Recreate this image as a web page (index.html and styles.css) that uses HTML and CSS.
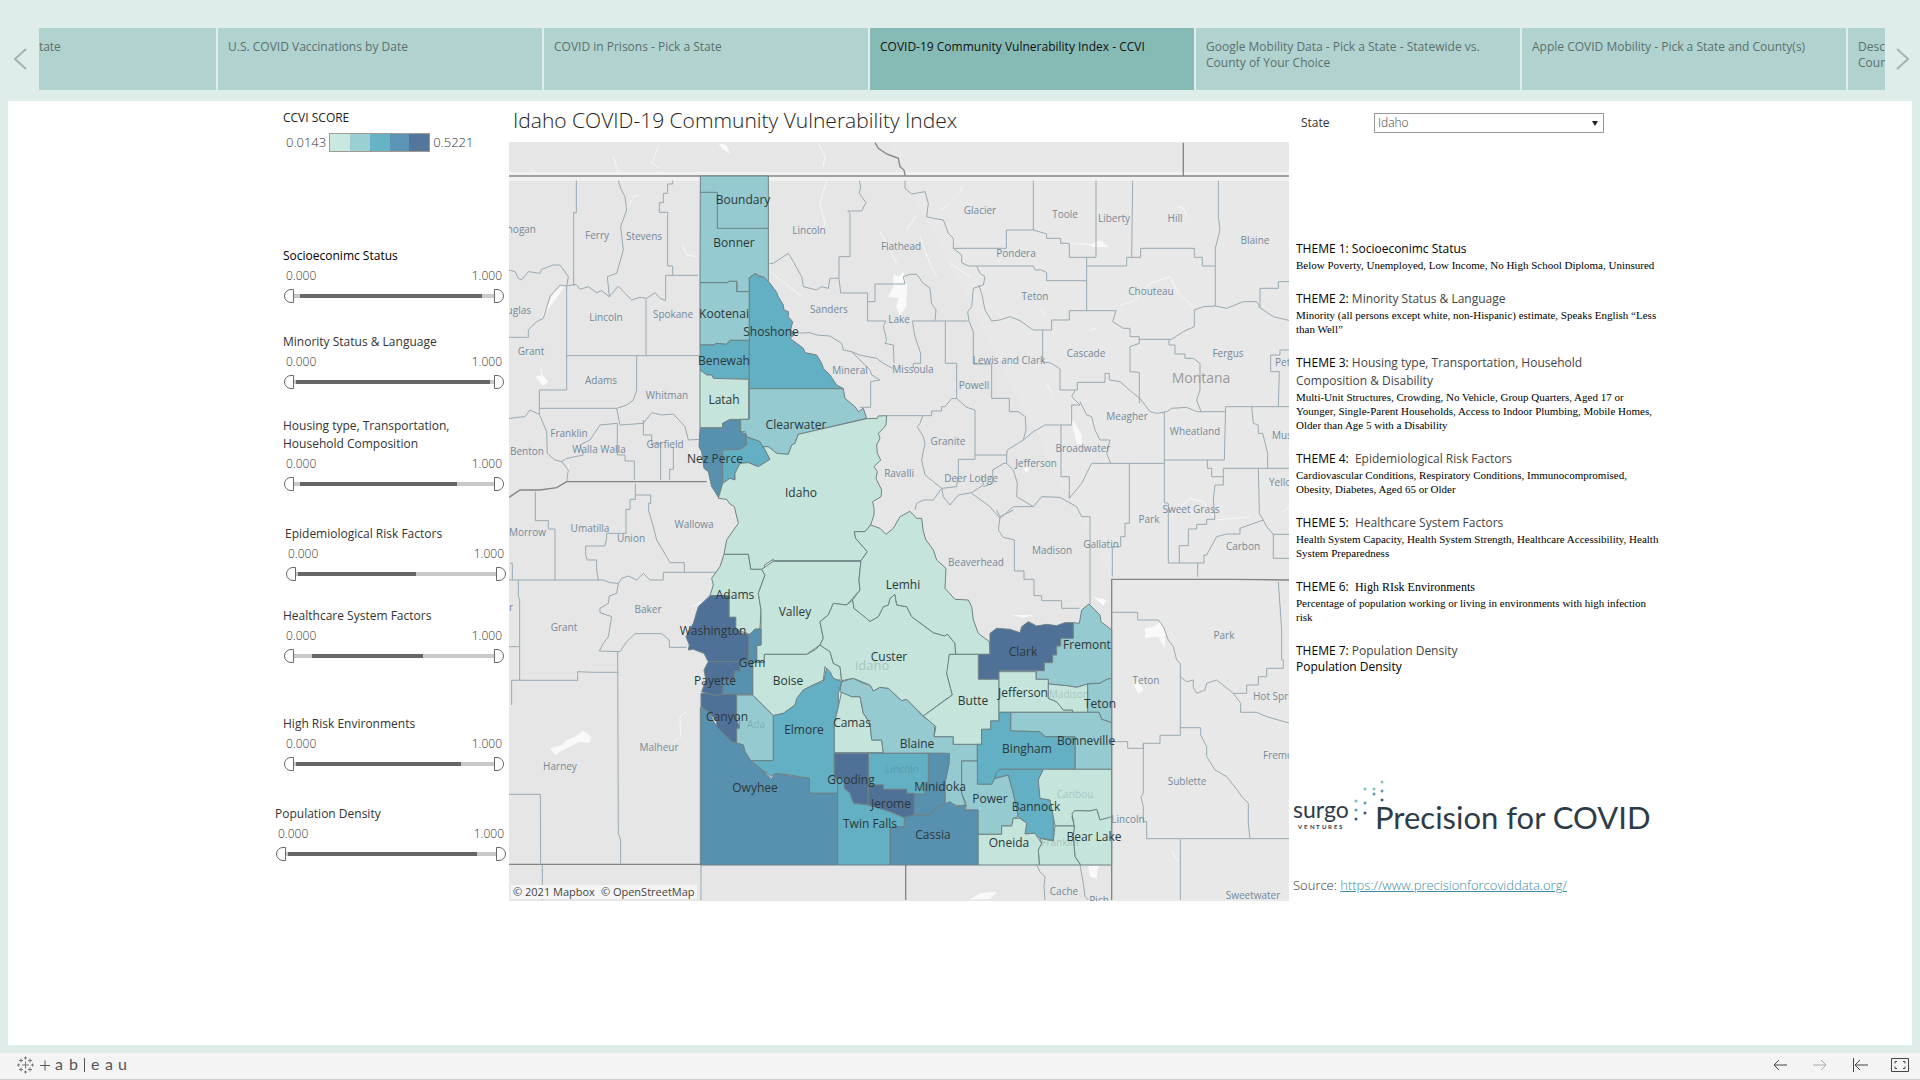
FILE: index.html
```html
<!DOCTYPE html>
<html lang="en">
<head>
<meta charset="utf-8">
<title>COVID-19 Community Vulnerability Index - CCVI</title>
<link rel="stylesheet" href="styles.css">
</head>
<body>
<nav class="story" aria-label="Story points">
  <button class="story-arrow" type="button" aria-label="Previous"><svg width="14" height="24" viewBox="0 0 14 24"><path d="M13 2 2 12 13 22"/></svg></button>
  <div class="story-window">
    <div class="story-track">
      <button class="point" type="button">COVID Variants - Pick a State</button>
      <button class="point" type="button">U.S. COVID Vaccinations by Date</button>
      <button class="point" type="button">COVID in Prisons - Pick a State</button>
      <button class="point point-active" type="button">COVID-19 Community Vulnerability Index - CCVI</button>
      <button class="point" type="button">Google Mobility Data - Pick a State - Statewide vs. County of Your Choice</button>
      <button class="point" type="button">Apple COVID Mobility - Pick a State and County(s)</button>
      <button class="point" type="button">Desc<br>Coun</button>
    </div>
  </div>
  <button class="story-arrow" type="button" aria-label="Next"><svg width="14" height="24" viewBox="0 0 14 24"><path d="M1 2 12 12 1 22"/></svg></button>
</nav>

<main class="sheet">
  <div class="dashboard">
    <section class="filters">
      <h2 class="legend-title">CCVI SCORE</h2>
      <div class="legend"><span>0.0143</span><div class="ramp"><i class="c1"></i><i class="c2"></i><i class="c3"></i><i class="c4"></i><i class="c5"></i></div><span>0.5221</span></div>

      <fieldset class="filter filter-first">
        <legend class="filter-title strong">Socioeconimc Status</legend>
        <div class="values"><span>0.000</span><span>1.000</span></div>
        <div class="slider"><div class="rail"><div class="fill" style="left:4%;width:89%"></div></div><input class="low" type="range" aria-label="Minimum" value="0"><input class="high" type="range" aria-label="Maximum" value="100"></div>
      </fieldset>
      <fieldset class="filter gap-sm">
        <legend class="filter-title">Minority Status &amp; Language</legend>
        <div class="values"><span>0.000</span><span>1.000</span></div>
        <div class="slider"><div class="rail"><div class="fill" style="left:2%;width:95%"></div></div><input class="low" type="range" aria-label="Minimum" value="0"><input class="high" type="range" aria-label="Maximum" value="100"></div>
      </fieldset>
      <fieldset class="filter">
        <legend class="filter-title">Housing type, Transportation,<br>Household Composition</legend>
        <div class="values"><span>0.000</span><span>1.000</span></div>
        <div class="slider"><div class="rail"><div class="fill" style="left:4%;width:77%"></div></div><input class="low" type="range" aria-label="Minimum" value="0"><input class="high" type="range" aria-label="Maximum" value="100"></div>
      </fieldset>
      <fieldset class="filter gap-md inset">
        <legend class="filter-title">Epidemiological Risk Factors</legend>
        <div class="values"><span>0.000</span><span>1.000</span></div>
        <div class="slider"><div class="rail"><div class="fill" style="left:2%;width:58%"></div></div><input class="low" type="range" aria-label="Minimum" value="0"><input class="high" type="range" aria-label="Maximum" value="100"></div>
      </fieldset>
      <fieldset class="filter gap-xs">
        <legend class="filter-title">Healthcare System Factors</legend>
        <div class="values"><span>0.000</span><span>1.000</span></div>
        <div class="slider"><div class="rail"><div class="fill" style="left:10%;width:54%"></div></div><input class="low" type="range" aria-label="Minimum" value="0"><input class="high" type="range" aria-label="Maximum" value="100"></div>
      </fieldset>
      <fieldset class="filter gap-lg">
        <legend class="filter-title">High Risk Environments</legend>
        <div class="values"><span>0.000</span><span>1.000</span></div>
        <div class="slider"><div class="rail"><div class="fill" style="left:2%;width:81%"></div></div><input class="low" type="range" aria-label="Minimum" value="0"><input class="high" type="range" aria-label="Maximum" value="100"></div>
      </fieldset>
      <fieldset class="filter gap-md wide">
        <legend class="filter-title">Population Density</legend>
        <div class="values"><span>0.000</span><span>1.000</span></div>
        <div class="slider"><div class="rail"><div class="fill" style="left:2%;width:88%"></div></div><input class="low" type="range" aria-label="Minimum" value="0"><input class="high" type="range" aria-label="Maximum" value="100"></div>
      </fieldset>
    </section>

    <section class="map-pane">
      <h1 class="map-title">Idaho COVID-19 Community Vulnerability Index</h1>
      <div class="map">
      <svg class="map-svg" viewBox="9 12 780 759" role="img" aria-label="Map of Idaho counties by vulnerability score">
        <g transform="scale(.33333)">
          <path class="land-east" d="M1160 36H2370V2320H1835V1348Z"/>
          <path class="band" d="M27 125H2370V152H27Z"/>
          <g class="water">
            <path d="M125 560 160 490 195 462 180 490 150 530Z"/>
            <path d="M105 740 125 735 118 700 128 735 145 755 130 768Z"/>
            <path d="M1180 430 1195 440 1210 425 1222 470 1218 530 1200 560 1188 530 1196 505 1165 500 1180 470Z"/>
            <path d="M655 40 680 45 690 72 665 55Z"/>
            <path d="M1710 860 1725 880 1745 915 1745 945 1730 940 1722 905Z"/>
            <path d="M1770 345 1800 330 1825 350 1780 352Z"/>
            <path d="M150 1855 185 1845 200 1830 225 1820 250 1802 275 1820 268 1840 240 1835 210 1850 190 1860 165 1875Z"/>
            <path d="M1935 1495 1960 1490 1980 1477 1995 1500 1995 1555 1975 1520 1950 1522 1935 1525Z"/>
            <path d="M1900 1660 1915 1650 1930 1680 1915 1692Z"/>
            <path d="M1765 2207 1795 2207 1790 2245 1770 2240Z"/>
            <path d="M1410 2308 1440 2290 1490 2285 1470 2308Z"/>
            <path d="M1535 1455 1600 1455 1570 1463Z"/>
            <path d="M1780 1400 1820 1410 1810 1427Z"/>
            <path d="M1570 1015 1590 1010 1580 1030Z"/>
          </g>
          <g class="streams">
            <path d="M980 152 960 220 975 280 960 320M955 40 975 80 970 110M475 50 455 100 480 115M340 80 355 125M380 240 400 200 418 195M90 115 105 130M548 345 560 375 590 380M810 425 860 465 905 500M1140 305 1165 350 1190 400M1220 300 1250 255M1260 320 1290 400 1310 440M1320 240 1345 225M2030 230 2050 235 2062 262M1860 525 1900 515 1950 460 2010 440 2035 490 2080 530M1770 600 1790 595M1700 340 1800 345M1640 760 1655 790M2010 1160 2070 1105 2110 1115 2150 1170 2250 1160M560 1745 540 1760 542 1820 520 1835M205 1030 205 1000M575 1430 620 1410M1350 400 1410 440M2350 1145 2370 1130M1625 540 1635 560M1378 190 1385 170M2015 2165 2035 2195"/>
          </g>
          <g class="county">
            <path d="M229 152V248H221V468M355 152L362 175 375 200 380 240 362 290 370 360 350 430 322 440 328 500M518 152V162H503V190H490V218H478V247H503V408H518V436M594 436H497V512M27 420 45 425 55 445 65 450 85 425 120 430 125 418 160 405 180 405 205 440 200 468M27 622H85V600L110 575 130 565 150 500 180 465 200 468 228 463 240 478 265 470 290 488 305 482 328 500 355 468 375 490 395 510 420 502 440 505 465 488 480 505 497 512"/>
            <path d="M200 468V780H118V853L90 840 75 860 50 862 27 866M118 835H350L380 825 400 810 410 780V677M200 677H597M438 508V677M350 835 360 885 430 880 455 848 485 855 520 852 555 890 565 930 597 928M430 870V915H455V940H482V1050M520 950V1018H509V1050M352 880V975H375V993H403V1050M352 880 300 885 270 930 240 945 250 975 200 985 185 995M118 853 140 905 142 970 165 990 185 995 205 1020 200 1055"/>
            <path d="M106 1085V1172H145V1197H165V1350M406 1060V1095H452V1120H446V1142L460 1190 470 1230 500 1280 510 1298H553V1327M406 1095V1108H390V1138H378V1210H320V1225L315 1248H257V1275L262 1290H290V1320L295 1350M27 1350H310L330 1358 355 1360 365 1345 385 1338 410 1350 430 1330 450 1350H490V1327H650"/>
            <path d="M355 1360 350 1390 328 1398 325 1420 300 1435 300 1448 335 1460 325 1520 310 1540 298 1563 360 1565 380 1535 405 1511H485L508 1530V1552H560M353 1565 355 2110 362 2130V2200M35 1725V1651H233V1625L280 1627H355M27 1993H121L122 2200M55 1350V1400L59 1410V1651M27 1550H58M127 2205V2310M603 2205V2310M30 1300H37V1350"/>
            <path d="M1078 152 1082 170 1078 190 1098 218 1085 243H1043L1050 250V380H1017V445H990L985 475 965 470 950 480 910 470 905 440 880 395 865 370 850 380 820 400 808 400M1017 445 1022 489H1103V573H1158L1150 590 1160 630 1155 640 1180 645 1182 700M1103 515H1125V462H1215L1210 440 1230 433 1250 433 1270 460 1290 475 1295 520 1308 540 1305 572"/>
            <path d="M875 610 930 608 950 615 990 618 1025 640 1030 660 1055 665 1078 675 1130 685 1150 700 1178 715M1055 665 1080 690 1110 720 1115 735 1140 750 1112 755V832H1080M1160 857H1268"/>
            <path d="M1215 152 1215 175 1235 192 1275 185 1285 220 1280 260 1300 265 1330 270 1345 310 1360 325 1360 355 1385 375 1385 398 1405 408 1430 408 1440 430 1455 440 1450 465 1420 475 1415 530 1403 545 1407 573 1420 605V702M1600 152V300H1519V355H1360M1430 408H1600L1605 420H1625L1640 428V452H1760M1600 300 1640 312V325H1682V340H1708V382H1788V152"/>
            <path d="M1760 382V542M1760 408H1880V382H1922V355H2083V382H2107V408H2146M1898 152 1895 382M2155 152V260L2160 300 2146 355V528M1436 465 1445 490 1455 540 1475 573 1500 570 1530 560 1560 572 1600 600 1655 600V570H1708V542H1848L1838 575 1870 595H1890V620H1918V628H2015L2050 605 2083 590V540L2110 530 2146 528 2180 535 2230 515 2270 515 2280 530V475H2335V455H2370M2275 530 2320 560 2370 572"/>
            <path d="M1628 600V695L1655 700 1680 717V780H1732V757H1815V730H1828V750L1860 755 1900 790 1920 805 1950 845 1970 850 2000 845 2015 835 2060 832 2090 845H2177M1993 845V990H2173L2177 830M1918 628V640L1890 650V725L1918 727V820M2007 628V645H2025V672H2055V685H2080L2100 700V780L2090 810 2103 845M2177 830H2370M2335 830 2338 725H2312V675H2340V660H2370M2255 830 2260 880 2275 885V910H2288L2303 970V1015"/>
            <path d="M1237 573H1403M1237 573 1245 620 1252 640 1262 670V700H1240V715M1336 573V700H1370V805L1355 806 1335 830H1325V843H1295V857H1268L1260 880 1252 890 1270 920 1275 940 1265 990 1275 1035 1300 1055 1325 1075 1330 1100 1350 1125 1375 1095 1415 1088 1450 1065 1445 1035M1370 805 1400 832 1425 840V975H1520L1522 960 1570 930 1578 900 1576 860 1555 845H1528V805H1475V702H1420M1425 975V988H1375V1035L1370 1070 1325 1075"/>
            <path d="M1520 975V1000H1512L1478 1020V1060L1450 1070M1520 1000 1540 1020 1552 1060 1550 1100 1600 1130H1540L1500 1165 1470 1130 1415 1090M1600 1130 1625 1100 1680 1102 1730 1130 1745 1160H1770V1422M1570 930 1600 905 1635 885H1715V825L1740 825 1715 800 1725 782M1683 885V1040H1708V1105L1745 1060 1775 1000H1993M1740 815 1760 855 1775 860 1785 900 1800 930 1830 930 1820 970 1832 1000"/>
            <path d="M1993 990V1118L2005 1120V1299H2112V1275H2120L2150 1220 2180 1212H2220V1195L2290 1170 2278 1150V1140L2275 1015M1888 1000V1180H1875V1220H1862V1250H1837V1340M2122 990V1015H2135V1040H2170V1015H2370M2170 1040V1065H2145L2140 1110 2145 1168H2120V1183H2090V1197H2065V1247H2038V1299M2093 1299V1340M2290 1170 2300 1190 2320 1213H2370M2320 1213V1285H2370"/>
            <path d="M1245 1140 1250 1120 1270 1110 1300 1110 1325 1075M1490 1140 1500 1160 1495 1200 1510 1222 1543 1230V1323H1572V1348H1602V1397H1625V1412H1685V1435H1738M1540 1140 1500 1160M1837 1447H1913V1470H1975L1990 1490 2005 1530 2020 1550 2030 1590 2041 1600V1816H1980V1840H1930V1855H1883V1835H1837M1930 1840V1990L1923 2000 1930 2030V2075H1940V2126H2370"/>
            <path d="M2041 1640 2060 1655 2080 1650 2080 1672 2090 1690 2115 1680 2120 1660 2150 1650 2200 1690 2222 1720V1747H2270L2300 1760 2370 1780M2200 1690H2240V1665H2275V1640H2300V1615H2350V1590H2345V1500L2335 1355M2041 1793H2102V1815L2120 1850 2120 1880 2145 1920 2180 1940 2200 1965 2230 2005 2245 2020V2080L2250 2126M2041 2128V2310M1610 2205 1620 2225 1635 2240 1632 2270 1635 2310M1740 2205 1750 2260 1755 2300 1765 2310"/>
          </g>
          <path class="state-line" d="M27 138H2370M2050 38V138M1125 38 1135 55 1160 72 1195 85 1200 110 1212 120 1216 138M27 1102 60 1080 120 1080 170 1073 200 1055H620M27 2203H1835M1217 2205V2310M1835 2310V1348H1980L2200 1348 2370 1350"/>
          <g class="idaho">
            <path class="c2" d="M601 138H805V455L790 442 765 431 748 443V485H711V454H688L683 458H600Z"/>
            <path class="line" d="M601 187H652V295H805"/>
            <path class="c2" d="M600 458H683L688 454H710V485H748V631H690L680 643 650 640 640 645H600Z"/>
            <path class="c3" d="M600 645H640L650 640 680 643 690 631H748V748L640 745 635 735 620 735 600 720Z"/>
            <path class="c3" d="M748 443 765 431 775 440 790 440 810 460 830 487 835 500 850 525 852 540 865 545 865 560 878 575 872 600 885 612 870 625 910 655 915 668 950 675 965 700 970 715 990 735 1010 765 1030 776H748Z"/>
            <path class="c1" d="M600 720 620 735 635 735 640 745 746 748V868H690L668 880V893H600Z"/>
            <path class="c2" d="M748 776H1030L1035 805 1065 830 1075 845 1090 835 1100 865 895 913 885 940 875 945 865 973 830 970 805 950 780 950V935L740 920 735 905 722 905V868H748Z"/>
            <path class="c4" d="M600 895H668V880L690 870H720V905L738 912 740 945 720 958H668V1060L655 1102 645 1085 635 1070 625 1025 612 1015 605 965 597 950Z"/>
            <path class="c3" d="M668 960 720 958 740 945 738 920 780 935 800 970 810 988 775 1010 745 998 720 1000 705 1030V1050L690 1045 668 1060Z"/>
            <path class="c1" d="M1100 866 1132 865 1135 858 1160 857 1158 885 1150 895 1135 910 1140 925 1130 945 1132 970 1142 990 1122 1010 1132 1025 1128 1045 1145 1080 1143 1100 1118 1115 1122 1135 1122 1155 1112 1185 1095 1205 1063 1205 1067 1225 1102 1265 1083 1292H820V1288L793 1305V1318H752L745 1273H672L680 1230 715 1180 703 1130 690 1122 680 1108 655 1105 668 1060 690 1045 705 1050V1030L720 1000 745 998 775 1010 810 988 790 950H805L830 970 865 973 875 945 885 940 895 913Z"/>
            <path class="c1" d="M672 1273H745L752 1318H785L795 1335 775 1390 783 1440 780 1495 750 1513 725 1505 707 1495V1462H687V1397H630L640 1365 635 1345 660 1310Z"/>
            <path class="c1" d="M820 1294H1083L1077 1350 1080 1380 1058 1405 1040 1425 1000 1420 985 1455 960 1475 970 1525 960 1545 945 1555 920 1573H793V1597H770V1547L783 1545V1440L775 1390 795 1335 785 1318Z"/>
            <path class="c1" d="M793 1573H920L945 1560 960 1545 990 1565 1000 1600 1020 1610 1025 1650 1000 1650 975 1610 970 1650 910 1680 885 1725 850 1750 820 1757 758 1695V1597H793Z"/>
            <path class="c5" d="M630 1397H687V1462H707V1495L725 1510 747 1515 745 1595H625L612 1570 580 1558 565 1560 568 1545 558 1520 580 1480 595 1430Z"/>
            <path class="c4" d="M747 1515 765 1497H783V1545H770V1597H758V1693H668V1650H703V1622H720V1595H745Z"/>
            <path class="c5" d="M625 1595H720V1622H703V1650H668V1695L650 1697 620 1690 605 1685 618 1650 612 1620Z"/>
            <path class="c5" d="M603 1690 620 1690 650 1697 668 1693H710V1765L718 1795 710 1840 695 1835 650 1790 650 1775 625 1745 603 1730Z"/>
            <path class="c2" d="M710 1695H758L820 1757V1892H752L735 1865 730 1845 710 1840V1795H718V1765H710Z"/>
            <path class="c3" d="M820 1757 850 1750 885 1725 890 1705 910 1680 940 1665 970 1655 980 1615 990 1625 1000 1645 1025 1655 1015 1690 1015 1730 1003 1780V1945H1013V1990H928V1945L870 1935 825 1930 815 1940 780 1915 752 1892H820Z"/>
            <path class="c4" d="M601 1732 625 1745 650 1790 695 1835 730 1845 735 1865 752 1892 780 1915 815 1947 825 1930 870 1938 928 1945V1990H1013V2205H601Z"/>
            <path class="c1" d="M1025 1685 1055 1700 1080 1700 1090 1750 1110 1780 1115 1830H1145L1150 1868H1003V1780L1015 1730Z"/>
            <path class="c2" d="M1025 1655 1060 1645 1090 1660 1110 1665 1120 1683 1140 1672 1165 1675 1205 1712 1220 1708 1270 1760 1305 1780 1302 1820H1360V1843H1432V1893H1385V1990L1398 2030 1335 2020V1870H1150L1145 1830H1115L1110 1780 1090 1750 1080 1700 1055 1700 1020 1685Z"/>
            <path class="c1" d="M1058 1410 1062 1435 1095 1460 1110 1474 1135 1460 1150 1430 1165 1425 1170 1405 1185 1393 1190 1425 1220 1430 1235 1460 1275 1490 1300 1508 1335 1518 1342 1512 1365 1540 1367 1573H1348L1345 1620 1340 1630 1357 1695 1335 1710 1270 1758 1220 1708 1205 1712 1165 1675 1140 1672 1120 1683 1110 1665 1060 1645 1025 1652 1020 1610 1000 1600 990 1565 960 1545 970 1525 960 1475 985 1455 1000 1420 1040 1425Z"/>
            <path class="c1" d="M1083 1292 1102 1265 1067 1225 1063 1205 1095 1205 1112 1185 1140 1195 1158 1213 1180 1195 1200 1160 1230 1144 1250 1165 1265 1165 1270 1205 1278 1230 1300 1260 1310 1290 1338 1315 1335 1375 1365 1408 1405 1410 1415 1430 1420 1470 1435 1510 1468 1535 1470 1573H1367L1365 1540 1342 1512 1335 1518 1300 1508 1235 1460 1220 1430 1190 1425 1185 1393 1170 1405 1165 1425 1150 1430 1135 1460 1110 1474 1062 1435 1058 1410 1080 1380 1077 1350Z"/>
            <path class="c5" d="M1470 1510 1490 1495 1530 1498 1560 1508 1565 1490 1585 1475 1610 1488 1640 1483 1670 1487 1695 1478H1720V1525H1682V1548H1670V1575H1658V1598H1633V1622H1497V1648H1435V1573H1470Z"/>
            <path class="c2" d="M1720 1478 1738 1480 1745 1440 1767 1422 1800 1455 1803 1475 1835 1500V1645L1820 1648 1800 1660 1770 1660 1730 1672 1700 1667 1645 1662V1648H1608V1622H1633V1598H1658V1575H1670V1548H1682V1525H1720Z"/>
            <path class="c1" d="M1348 1573H1435V1648H1497V1773H1472V1798H1445V1843H1360V1820H1302L1308 1790 1270 1758 1357 1695 1340 1630Z"/>
            <path class="c1" d="M1497 1625H1608V1648H1645V1705L1670 1715 1690 1740H1718V1747H1497Z"/>
            <path class="c1" d="M1645 1662 1700 1667 1730 1672 1763 1662V1747H1718V1740H1690L1670 1715 1645 1705Z"/>
            <path class="c2" d="M1763 1662 1800 1660 1820 1648 1835 1645V1778L1805 1768 1797 1747H1763Z"/>
            <path class="c2" d="M1532 1747H1797L1805 1768 1835 1778V1918H1725V1820H1635L1620 1805 1532 1803Z"/>
            <path class="c3" d="M1497 1747H1532V1803L1620 1805 1635 1820H1725V1918H1500L1485 1945 1475 1963H1432V1843H1445V1798H1472V1773H1497Z"/>
            <path class="c2" d="M1385 1893H1432V1963H1475L1485 1945 1525 1935 1540 1990 1555 2060 1540 2065 1535 2088H1505V2113H1434V2040H1398V2020L1385 1990Z"/>
            <path class="c3" d="M1500 1918H1630L1615 1950 1620 2005 1650 2010 1660 2060V2130L1620 2125 1605 2110 1575 2112 1580 2080 1555 2060 1540 1990 1525 1935 1485 1945 1487 1930Z"/>
            <path class="c1" d="M1630 1918H1835V2063L1800 2070 1790 2038 1770 2043 1725 2042 1716 2060 1723 2088H1665L1660 2060 1650 2010 1620 2005 1615 1950Z"/>
            <path class="c1" d="M1716 2050 1725 2042 1770 2043 1790 2038 1800 2070 1835 2060V2205H1742L1725 2180 1720 2120 1723 2088Z"/>
            <path class="c1" d="M1665 2088H1723L1720 2120 1725 2180 1742 2205H1618L1615 2160 1625 2140 1620 2125 1660 2133Z"/>
            <path class="c1" d="M1434 2113H1505V2088H1535L1540 2065 1560 2065 1580 2080 1575 2112 1605 2110 1625 2140 1615 2160 1618 2205H1434Z"/>
            <path class="c4" d="M1170 2090H1213V2055L1290 2055 1310 2030 1350 2015 1370 2030 1395 2025V2040H1434V2205H1170Z"/>
            <path class="c4" d="M1285 1870H1348V1900L1335 1960V2020L1310 2030 1290 2055 1240 2053V1992H1275V1960H1285Z"/>
            <path class="c3" d="M1105 1870H1285V1960H1275V1992H1220V1978H1150V1965H1105Z"/>
            <path class="c5" d="M1003 1870H1105V2025L1060 2020 1050 1990 1033 1975 1030 1945H1003Z"/>
            <path class="c5" d="M1105 1965H1150V1978H1220V1990H1242V2055L1210 2063 1170 2045 1130 2035 1105 2025Z"/>
            <path class="c3" d="M1013 1945H1030L1033 1975 1050 1990 1060 2020 1105 2025 1170 2045 1213 2063V2090H1170V2205H1013Z"/>
          </g>
        </g>
        <g class="base-labels">
          <text class="end" x="36" y="103">Okanogan</text><text x="97" y="109">Ferry</text><text x="144" y="110">Stevens</text><text x="106" y="191">Lincoln</text><text x="173" y="188">Spokane</text><text class="end" x="31" y="184">Douglas</text><text x="31" y="225">Grant</text><text x="101" y="254">Adams</text><text x="167" y="269">Whitman</text><text x="69" y="307">Franklin</text><text class="start" x="10" y="325">Benton</text><text x="99" y="323">Walla Walla</text><text x="165" y="318">Garfield</text><text x="309" y="104">Lincoln</text><text x="401" y="120">Flathead</text><text x="329" y="183">Sanders</text><text x="399" y="193">Lake</text><text x="350" y="244">Mineral</text><text x="413" y="243">Missoula</text>
          <text class="start" x="9" y="406">Morrow</text><text x="90" y="402">Umatilla</text><text x="194" y="398">Wallowa</text><text x="131" y="412">Union</text><text x="148" y="483">Baker</text><text x="64" y="501">Grant</text><text class="end" x="13" y="481">Wheeler</text><text x="159" y="621">Malheur</text><text x="60" y="640">Harney</text>
          <text x="480" y="84">Glacier</text><text x="565" y="88">Toole</text><text x="614" y="92">Liberty</text><text x="675" y="92">Hill</text><text x="755" y="114">Blaine</text><text x="516" y="127">Pondera</text><text x="535" y="170">Teton</text><text x="651" y="165">Chouteau</text><text x="586" y="227">Cascade</text><text x="728" y="227">Fergus</text><text class="start" x="775" y="236">Petroleum</text><text x="509" y="234">Lewis and Clark</text><text x="474" y="259">Powell</text><text x="627" y="290">Meagher</text><text x="695" y="305">Wheatland</text><text class="start" x="772" y="309">Musselshell</text><text x="448" y="315">Granite</text><text x="583" y="322">Broadwater</text><text x="536" y="337">Jefferson</text><text x="471" y="352">Deer Lodge</text><text class="end" x="414" y="347">Ravalli</text><text class="start" x="769" y="356">Yellowstone</text><text x="691" y="383">Sweet Grass</text><text x="649" y="393">Park</text>
          <text x="476" y="436">Beaverhead</text><text x="552" y="424">Madison</text><text x="601" y="418">Gallatin</text><text x="743" y="420">Carbon</text><text x="724" y="509">Park</text><text x="646" y="554">Teton</text><text class="start" x="753" y="570">Hot Springs</text><text class="start" x="763" y="629">Fremont</text><text x="687" y="655">Sublette</text><text x="628" y="693">Lincoln</text><text x="564" y="765">Cache</text><text x="599" y="774">Rich</text><text x="753" y="769">Sweetwater</text>
          <text class="state-name" x="701" y="253">Montana</text>
        </g>
        <g class="faint-labels">
          <text x="256" y="598">Ada</text><text x="402" y="643">Lincoln</text><text x="575" y="668">Caribou</text><text x="569" y="568">Madison</text><text x="560" y="716">Franklin</text><text class="big" x="372" y="540">Idaho</text>
        </g>
        <g class="labels">
          <text x="243" y="74">Boundary</text><text x="234" y="117">Bonner</text><text x="224" y="188">Kootenai</text><text x="271" y="206">Shoshone</text><text x="224" y="235">Benewah</text><text x="224" y="274">Latah</text><text x="296" y="299">Clearwater</text><text x="215" y="333">Nez Perce</text><text x="301" y="367">Idaho</text><text x="235" y="469">Adams</text><text x="295" y="486">Valley</text><text x="213" y="505">Washington</text><text x="252" y="537">Gem</text><text x="215" y="555">Payette</text><text x="288" y="555">Boise</text><text x="227" y="591">Canyon</text><text x="304" y="604">Elmore</text><text x="352" y="597">Camas</text><text x="255" y="662">Owyhee</text><text x="351" y="654">Gooding</text><text x="391" y="678">Jerome</text><text x="370" y="698">Twin Falls</text><text x="403" y="459">Lemhi</text><text x="389" y="531">Custer</text><text x="417" y="618">Blaine</text><text x="473" y="575">Butte</text><text x="523" y="567">Jefferson</text><text x="523" y="526">Clark</text><text x="587" y="519">Fremont</text><text x="600" y="578">Teton</text><text x="586" y="615">Bonneville</text><text x="527" y="623">Bingham</text><text x="440" y="661">Minidoka</text><text x="490" y="673">Power</text><text x="536" y="681">Bannock</text><text x="433" y="709">Cassia</text><text x="509" y="717">Oneida</text><text x="594" y="711">Bear Lake</text>
        </g>
      </svg>
      <p class="credit"><span>© 2021 Mapbox</span><span>© OpenStreetMap</span></p>
      </div>
    </section>

    <section class="info">
      <div class="state-row"><label for="state">State</label>
        <div class="select-box"><select id="state"><option>Idaho</option><option>Montana</option><option>Oregon</option></select></div></div>
      <div class="themes">
        <div class="theme"><h3><b>THEME 1:</b> <b>Socioeconimc Status</b></h3><p>Below Poverty, Unemployed, Low Income, No High School Diploma, Uninsured</p></div>
        <div class="theme"><h3><b>THEME 2:</b> Minority Status &amp; Language</h3><p>Minority (all persons except white, non-Hispanic) estimate, Speaks English “Less<br>than Well”</p></div>
        <div class="theme"><h3><b>THEME 3:</b> Housing type, Transportation, Household<br>Composition &amp; Disability</h3><p>Multi-Unit Structures, Crowding, No Vehicle, Group Quarters, Aged 17 or<br>Younger, Single-Parent Households, Access to Indoor Plumbing, Mobile Homes,<br>Older than Age 5 with a Disability</p></div>
        <div class="theme"><h3><b>THEME 4:</b>&nbsp; Epidemiological Risk Factors</h3><p>Cardiovascular Conditions, Respiratory Conditions, Immunocompromised,<br>Obesity, Diabetes, Aged 65 or Older</p></div>
        <div class="theme"><h3><b>THEME 5:</b>&nbsp; Healthcare System Factors</h3><p>Health System Capacity, Health System Strength, Healthcare Accessibility, Health<br>System Preparedness</p></div>
        <div class="theme"><h3><b>THEME 6:</b>&nbsp; <span class="serif">High RIsk Environments</span></h3><p>Percentage of population working or living in environments with high infection<br>risk</p></div>
        <div class="theme"><h3><b>THEME 7:</b> Population Density</h3><p class="plain">Population Density</p></div>
      </div>
      <svg class="brand" width="360" height="64" viewBox="0 0 360 64" role="img" aria-label="Surgo Ventures Precision for COVID">
        <text class="surgo" x="0" y="46">surgo</text>
        <text class="ventures" x="5 11 17 23 29 35 41 46" y="57">VENTURES</text>
        <g class="dots"><g fill="#7cc3c2"><circle cx="89" cy="10" r="1.500"/><circle cx="72" cy="17" r="1.500"/><circle cx="81" cy="17" r="1.500"/><circle cx="63" cy="29" r="1.500"/></g><g fill="#5f9bb0"><circle cx="89" cy="19" r="1.500"/><circle cx="81" cy="22" r="1.500"/><circle cx="72" cy="31" r="1.500"/><circle cx="63" cy="38" r="1.500"/></g><g fill="#33587d"><circle cx="89" cy="28" r="1.500"/><circle cx="72" cy="41" r="1.500"/><circle cx="63" cy="47" r="1.500"/></g></g>
        <text class="precision" x="82" y="57">Precision for COVID</text>
      </svg>
      <p class="source">Source: <a href="https://www.precisionforcoviddata.org/">https://www.precisionforcoviddata.org/</a></p>
    </section>
  </div>
</main>

<footer class="toolbar">
  <a class="tableau" href="#" aria-label="Tableau">
    <svg width="112" height="20" viewBox="0 0 112 20">
      <path class="mark" d="M5 10H12M8.500 6.500V13.500M0 10H3M1.500 8.500V11.500M14 10H17M15.500 8.500V11.500M7 3H10M8.500 1.500V4.500M7 17H10M8.500 15.500V18.500M2 5.500H6M4 3.500V7.500M11 5.500H15M13 3.500V7.500M2 14.500H6M4 12.500V16.500M11 14.500H15M13 12.500V16.500"/>
      <path class="tee" d="M23 10.500H33M28 5.500V15.500M67.500 3V17"/>
      <text x="38 52 74 88 101" y="15">abeau</text>
    </svg>
  </a>
  <div class="tools">
    <button type="button" aria-label="Undo"><svg width="18" height="16"><path d="M16 8H3M8 3 3 8 8 13"/></svg></button>
    <button type="button" class="off" aria-label="Redo" disabled><svg width="18" height="16"><path d="M2 8H15M10 3 15 8 10 13"/></svg></button>
    <button type="button" aria-label="Revert"><svg width="18" height="16"><path d="M2.500 1V15M17 8H4M9 3 4 8 9 13"/></svg></button>
    <button type="button" aria-label="Full screen"><svg width="18" height="16"><path d="M.5 1.500H17.500V14.500H.5ZM4 6.500V4.500H6M12 4.500H14V6.500M14 9.500V11.500H12M6 11.500H4V9.500"/></svg></button>
  </div>
</footer>
</body>
</html>
```
FILE: styles.css
```css
* { box-sizing: border-box; }
body {
  margin: 0;
  min-height: 100vh;
  display: flex;
  flex-direction: column;
  background: #dfedea;
  color: #333;
  font: 13px/18px "Open Sans", "Noto Sans", sans-serif;
}
h1, h2, h3, p, fieldset { margin: 0; padding: 0; border: 0; font-weight: 400; font-size: inherit; }
button { font: inherit; border: 0; padding: 0; background: none; color: inherit; }

.story { display: flex; height: 62px; margin-top: 28px; }
.story-arrow { flex: none; width: 39px; display: flex; align-items: center; justify-content: center; }
.story-arrow:last-child { width: 35px; }
.story-arrow svg { fill: none; stroke: #a3b3b0; stroke-width: 2; }
.story-window { flex: 1; overflow: hidden; }
.story-track { display: flex; gap: 2px; height: 100%; margin-left: -147px; }
.point {
  flex: none; width: 324px; padding: 11px 10px;
  display: flex; align-items: flex-start;
  background: #b1d3cf; color: #5b706d;
  line-height: 16px; text-align: left; font-size: 12px;
}
.point-active { background: #86bbb5; color: #111; }

.sheet { flex: 1; background: #fff; margin: 11px 8px 8px; }
.dashboard { display: grid; grid-template-columns: 254px 780px 376px; justify-content: center; }

.c1 { fill: #c5e4db; background: #c9e8df; }
.c2 { fill: #95cad0; background: #9acfd3; }
.c3 { fill: #63afc3; background: #67b3c6; }
.c4 { fill: #5890b0; background: #5b94b4; }
.c5 { fill: #4f7198; background: #53769d; }

.filters { padding: 8px 5px 0 28px; }
.legend-title { font-size: 12px; color: #222; }
.legend { display: flex; align-items: center; gap: 3px; height: 20px; margin-top: 5px; padding-left: 3px; font-weight: 300; }
.ramp { display: flex; width: 101px; height: 19px; border: 1px solid #a39b8f; }
.ramp i { flex: 1; }

.filter { margin: 24px 0 0; width: 222px; min-width: 0; }
.filter-first { margin-top: 94px; }
.gap-xs { margin-top: 22px; }
.gap-sm { margin-top: 26px; }
.gap-md { margin-top: 30px; }
.gap-lg { margin-top: 48px; }
.inset { padding-left: 2px; width: 224px; }
.wide { margin-left: -8px; width: 232px; }
.filter-title { padding: 1px 0; font-size: 12px; color: #333; }
.strong { color: #000; }
.values { display: flex; justify-content: space-between; padding: 1px 3px; font-weight: 300; font-size: 12px; }
.slider { position: relative; height: 20px; margin: 0 1px; }
.rail { position: absolute; left: 8px; right: 8px; top: 8px; height: 4px; background: #c9c9c9; }
.fill { position: absolute; top: 0; height: 4px; background: #666; }
.slider input {
  position: absolute; inset: 0; width: 100%; height: 20px; margin: 0;
  appearance: none; background: none; pointer-events: none;
}
.slider input::-webkit-slider-thumb {
  appearance: none; width: 10px; height: 14px; background: #fff;
  border: 1px solid #666; pointer-events: auto;
}
.low::-webkit-slider-thumb { border-radius: 8px 0 0 8px; }
.high::-webkit-slider-thumb { border-radius: 0 8px 8px 0; }

.map-title { height: 41px; padding-left: 4px; font-size: 21px; line-height: 38px; font-weight: 300; color: #222; }
.map { position: relative; background: #e6e6e6; }
.map-svg { display: block; width: 100%; }
.land-east { fill: #e8e8e8; }
.band { fill: #f1f1f1; }
.water { fill: #f9f9f9; }
.streams path { fill: none; stroke: #f7f7f7; stroke-width: 3; }
.county path { fill: none; stroke: #98a9b2; stroke-width: 3; }
.state-line { fill: none; stroke: #858585; stroke-width: 4; }
.idaho path { stroke: #6c8285; stroke-width: 3; }
.idaho .line { fill: none; }
.map-svg text { text-anchor: middle; }
.map-svg .end { text-anchor: end; }
.map-svg .start { text-anchor: start; }
.base-labels { font-size: 10px; fill: #74899a; }
.base-labels .state-name { font-size: 14px; fill: #9a9a9a; }
.faint-labels { font-size: 10px; fill: #3c5a64; fill-opacity: .25; }
.faint-labels .big { font-size: 13px; }
.labels { font-size: 12px; fill: #2c3838; }
.credit {
  position: absolute; left: 2px; bottom: 2px; display: flex; gap: 6px; padding: 0 2px;
  background: #f5f5f5; color: #444; font-size: 11px; line-height: 14px;
}

.info { padding: 12px 0 0 4px; }
.state-row { display: flex; align-items: center; padding-left: 8px; height: 20px; font-size: 12px; }
.state-row label { width: 73px; }
.select-box { position: relative; width: 230px; height: 20px; }
.select-box::after {
  content: ""; position: absolute; right: 6px; top: 8px;
  border: 3px solid transparent; border-top: 5px solid #222; border-bottom: 0;
}
select {
  appearance: none; width: 100%; height: 20px; padding: 0 3px; border: 1px solid #999; border-radius: 0;
  background: #fff; color: #444; font: 300 12px/18px "Open Sans", "Noto Sans", sans-serif;
}
.themes { display: flex; flex-direction: column; gap: 18px; margin: 107px 0 0 3px; }
.theme h3 { font-size: 12px; color: #444; }
.theme b { font-weight: 400; color: #000; }
.theme p { font: 11px/14px "Liberation Serif", serif; color: #000; }
.theme .plain { font: 12px/14px "Open Sans", "Noto Sans", sans-serif; }
.serif { font: 12px/18px "Liberation Serif", serif; color: #000; }
.brand { display: block; margin-top: 98px; font-family: Lato, sans-serif; fill: #2d3c48; }
.surgo { font-size: 23px; }
.ventures { font-size: 6px; font-weight: 700; }
.precision { font-size: 31px; }
.source { margin-top: 40px; font-weight: 300; }
.source a { color: #3c8ba4; }

.toolbar {
  display: flex; align-items: center; justify-content: space-between;
  height: 27px; padding: 0 11px 2px 17px; background: #f4f4f4; border-bottom: 1px solid #ccc;
}
.tableau svg { display: block; font: 16px Lato, sans-serif; fill: #555; }
.mark { fill: none; stroke: #777; }
.tee { fill: none; stroke: #555; stroke-width: 1; }
.tools { display: flex; gap: 22px; }
.tools svg { display: block; fill: none; stroke: #444; }
.tools .off svg { stroke: #aaa; }
```
